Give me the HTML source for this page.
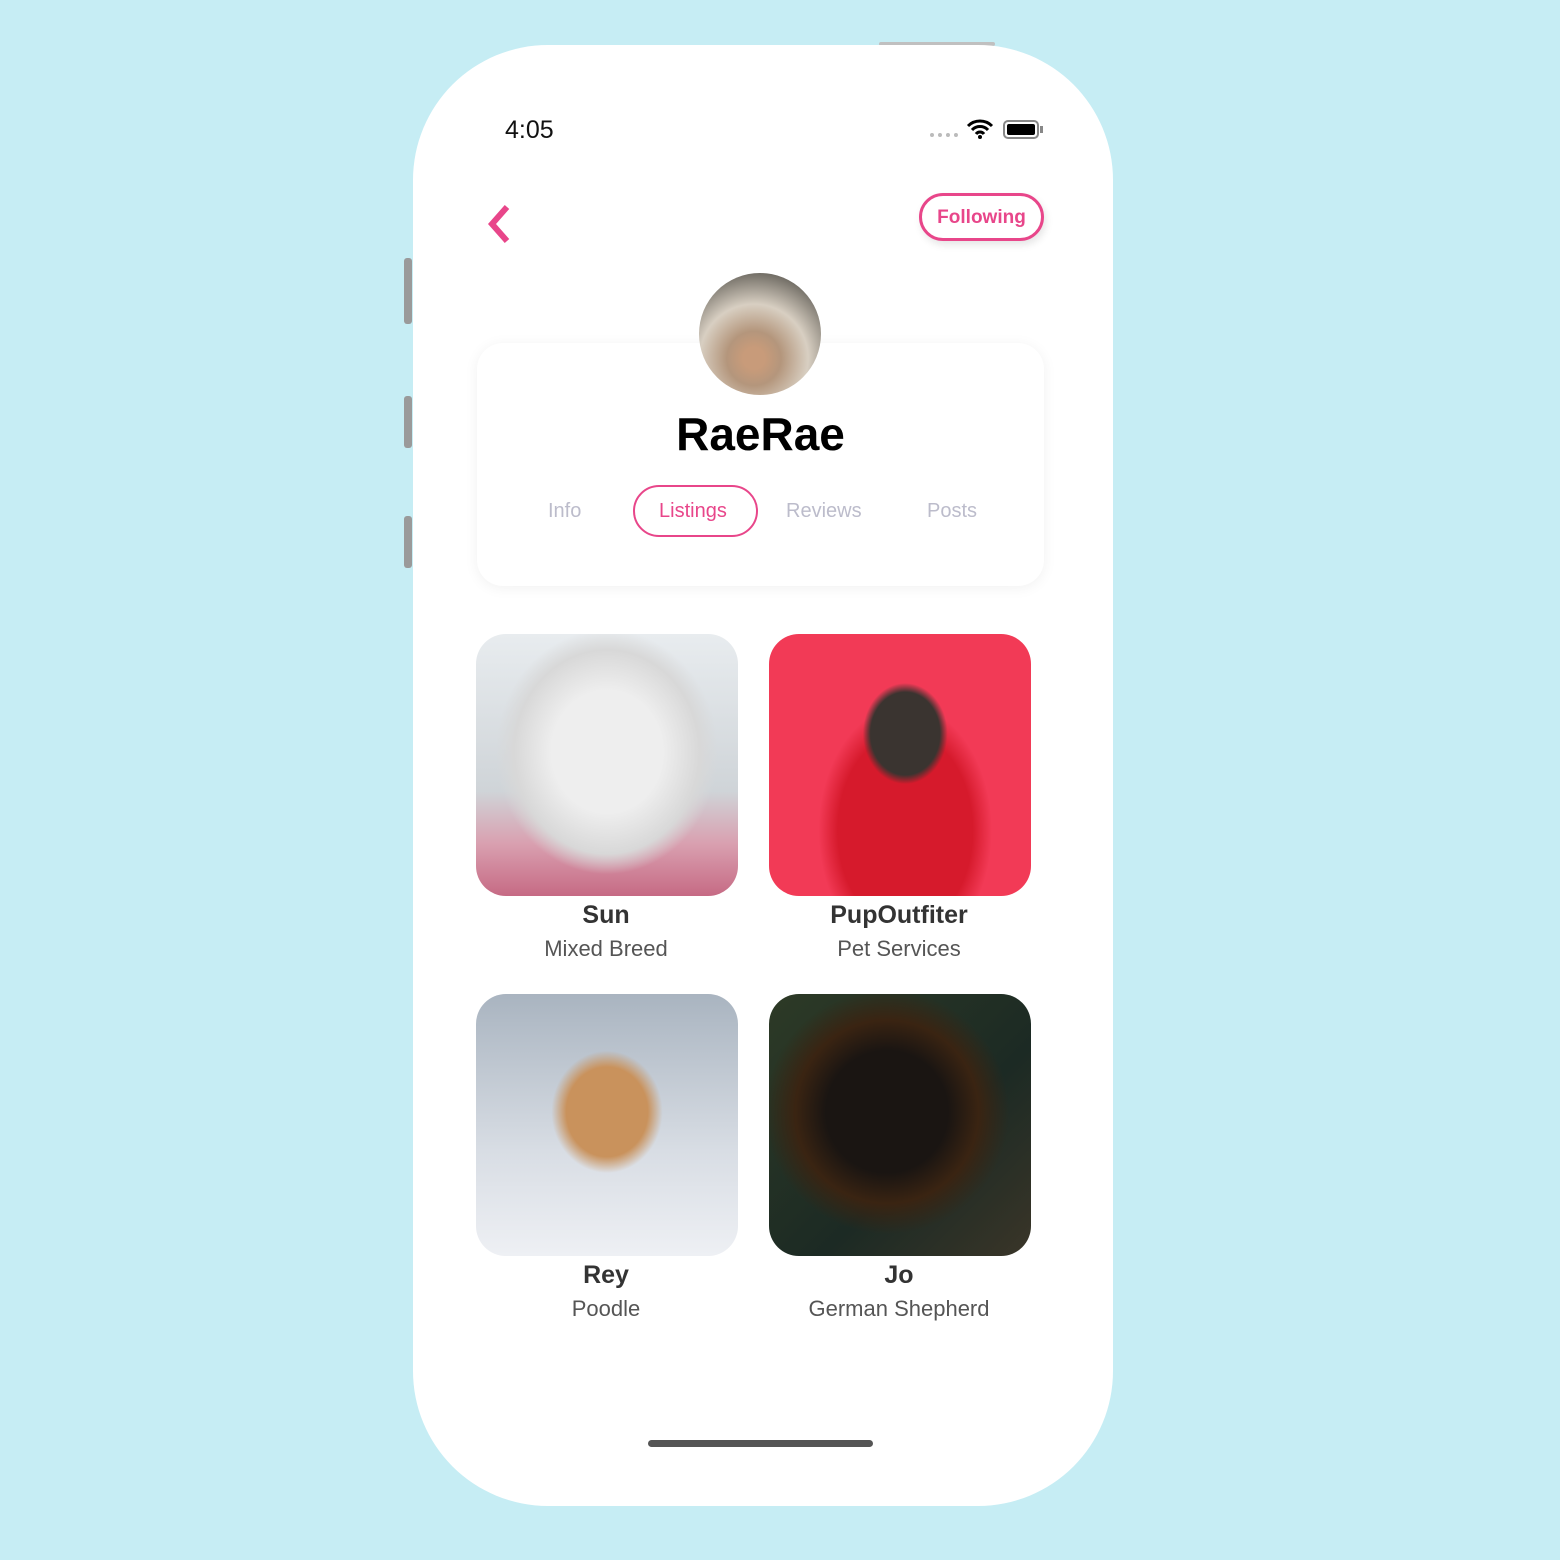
<!DOCTYPE html>
<html><head><style>
*{margin:0;padding:0;box-sizing:border-box}
body{width:1560px;height:1560px;background:#c6edf4;position:relative;overflow:hidden;font-family:"Liberation Sans",sans-serif}
.phone{position:absolute;left:413px;top:45px;width:700px;height:1461px;background:#fff;border-radius:135px}
.abs{position:absolute}
.btn{position:absolute;background:#9a9a9a;width:8px;left:404px;border-radius:3px}
.card{position:absolute;left:477px;top:343px;width:567px;height:243px;background:#fff;border-radius:26px;box-shadow:0 2px 14px rgba(0,0,0,0.06)}
.tab{position:absolute;top:500px;font-size:20px;color:#bcbccb}
.img{position:absolute;width:262px;height:262px;border-radius:30px;overflow:hidden}
.name{position:absolute;width:300px;text-align:center;font-size:25px;font-weight:bold;color:#333}
.sub{position:absolute;width:300px;text-align:center;font-size:22px;color:#555}
</style></head><body>
<div class="abs" style="left:879px;top:42px;width:116px;height:4px;background:#c0c0c0;border-radius:2px"></div>
<div class="btn" style="top:258px;height:66px"></div>
<div class="btn" style="top:396px;height:52px"></div>
<div class="btn" style="top:516px;height:52px"></div>
<div class="phone"></div>
<div class="abs" style="left:505px;top:116px;font-size:25px;color:#111">4:05</div>
<div class="abs" style="left:930px;top:133px;width:28px;height:4px;border-top:4px dotted #bbb"></div>
<svg class="abs" style="left:966px;top:119px" width="28" height="20" viewBox="0 0 28 20"><path d="M2 7a17 17 0 0 1 24 0M6 11a11 11 0 0 1 16 0M10 15a5 5 0 0 1 8 0" stroke="#000" stroke-width="3" fill="none"/><circle cx="14" cy="18" r="2"/></svg>
<div class="abs" style="left:1003px;top:120px;width:36px;height:19px;border:2px solid #888;border-radius:5px;padding:2px"><div style="width:100%;height:100%;background:#000;border-radius:2px"></div></div>
<div class="abs" style="left:1040px;top:126px;width:3px;height:7px;background:#888"></div>
<svg class="abs" style="left:484px;top:203px" width="30" height="42" viewBox="0 0 30 42"><path d="M23 4 L8 21 L23 38" stroke="#e8468a" stroke-width="6" fill="none"/></svg>
<div class="abs" style="left:919px;top:193px;width:125px;height:48px;border:3px solid #e8468a;border-radius:24px;color:#e8468a;font-size:19px;font-weight:bold;text-align:center;line-height:44px;box-shadow:2px 4px 8px rgba(0,0,0,0.1)">Following</div>
<div class="card"></div>
<div class="abs" style="left:699px;top:273px;width:122px;height:122px;border-radius:50%;background:radial-gradient(circle at 45% 70%,#c89b7a 0 10%,#b4967c 25%,#d8cfc2 50%,#6e6a62 80%,#30302c)"></div>
<div class="abs" style="left:477px;top:407px;width:567px;text-align:center;font-size:46px;font-weight:bold;color:#000">RaeRae</div>
<div class="tab" style="left:548px">Info</div>
<div class="abs" style="left:633px;top:485px;width:125px;height:52px;border:2px solid #e8468a;border-radius:26px"></div>
<div class="tab" style="left:659px;color:#e8468a">Listings</div>
<div class="tab" style="left:786px">Reviews</div>
<div class="tab" style="left:927px">Posts</div>

<div class="img" style="left:476px;top:634px;background:radial-gradient(ellipse at 50% 45%,#eee 0 30%,#d8d8d8 50%,transparent 60%),linear-gradient(180deg,#e8ecef 0%,#cfd4d8 60%,#d9a0b0 80%,#c66a84 100%)"></div>
<div class="img" style="left:769px;top:634px;background:radial-gradient(ellipse at 52% 38%,#3a3430 0 18%,transparent 22%),radial-gradient(ellipse at 52% 75%,#d61a2c 0 35%,transparent 45%),#f23a56"></div>
<div class="img" style="left:476px;top:994px;background:radial-gradient(ellipse at 50% 45%,#c9925c 0 22%,transparent 30%),linear-gradient(180deg,#a9b4c0 0%,#d8dde4 60%,#eef0f4 100%)"></div>
<div class="img" style="left:769px;top:994px;background:radial-gradient(ellipse at 45% 45%,#1a1512 0 30%,#3a2412 45%,transparent 60%),linear-gradient(135deg,#2d3a26,#1c2a24 60%,#3a3528)"></div>

<div class="name" style="left:456px;top:901px">Sun</div>
<div class="sub" style="left:456px;top:936px">Mixed Breed</div>
<div class="name" style="left:749px;top:901px">PupOutfiter</div>
<div class="sub" style="left:749px;top:936px">Pet Services</div>
<div class="name" style="left:456px;top:1261px">Rey</div>
<div class="sub" style="left:456px;top:1296px">Poodle</div>
<div class="name" style="left:749px;top:1261px">Jo</div>
<div class="sub" style="left:749px;top:1296px">German Shepherd</div>
<div class="abs" style="left:648px;top:1440px;width:225px;height:7px;background:#555;border-radius:4px"></div>
</body></html>
